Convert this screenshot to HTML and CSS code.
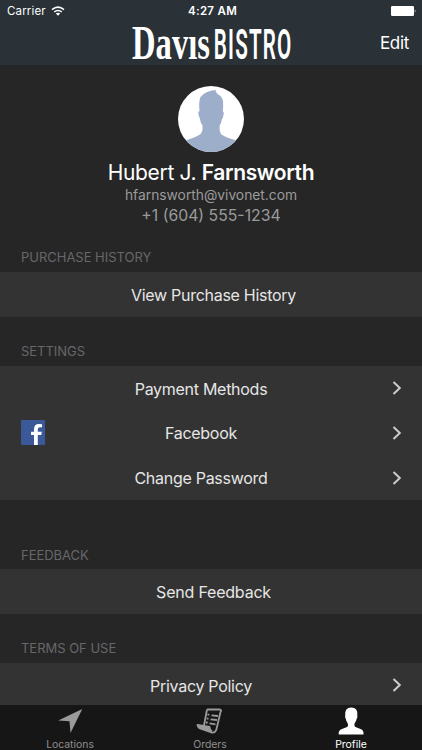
FILE: index.html
```html
<!DOCTYPE html>
<html lang="en">
<head>
<meta charset="utf-8">
<title>Profile</title>
<link rel="stylesheet" href="styles.css">
</head>
<body>
<div class="app">
  <header class="header">
    <div class="status">
      <span class="carrier">Carrier</span>
      <svg class="wifi" width="14" height="10" viewBox="0 0 14 10"><path d="M1 3.6Q7-1.4 13 3.6M3.2 5.9Q7 2.9 10.8 5.9" fill="none" stroke="#fff" stroke-width="1.5"/><path d="M4.8 7.4Q7 5.9 9.2 7.4L7 9.7Z" fill="#fff"/></svg>
      <span class="time">4:27 AM</span>
      <svg class="battery" width="26" height="10" viewBox="0 0 26 10"><rect width="23" height="10" rx="1.2" fill="#fff"/><path d="M23.8 3.2Q25.4 5 23.8 6.8Z" fill="#fff"/></svg>
    </div>
    <div class="nav">
      <svg class="logo" width="162" height="38" viewBox="0 0 162 38">
        <text class="logo-serif" x="2" y="35" textLength="78" lengthAdjust="spacingAndGlyphs">Davıs</text>
        <text class="logo-sans" transform="translate(83.800 34.500) scale(.48 1)">BISTRO</text>
      </svg>
      <span class="edit">Edit</span>
    </div>
  </header>
  <main class="content">
    <section class="profile">
      <svg class="avatar" width="66" height="66" viewBox="0 0 66 66">
        <defs><clipPath id="round"><circle cx="33" cy="33" r="33"/></clipPath></defs>
        <circle cx="33" cy="33" r="33" fill="#fff"/>
        <path clip-path="url(#round)" fill="#9daeca" d="M0 57Q5 55 9 54Q18 51 22 48.500Q25 46 24.500 39.500Q22.500 37 21.800 32.500Q20 29 20.300 25.500L21.500 25.500Q20.500 15 22.500 11Q27 5 38 4Q37 5.500 38.500 6.500L39.500 8Q44 10 45 15Q45.500 20 44.800 25.500Q46.200 25.500 45.500 29Q45 32 44 33Q43 38 41.700 39.500Q41.200 46 43.500 48.500Q48 51.500 57 54Q62 56 66 59V66H0Z"/>
      </svg>
      <h1 class="name">Hubert J. <b>Farnsworth</b></h1>
      <div class="email">hfarnsworth@vivonet.com</div>
      <div class="phone">+1 (604) 555-1234</div>
    </section>
    <h2 class="label first">PURCHASE HISTORY</h2>
    <div class="row"><span>View Purchase History</span></div>
    <h2 class="label">SETTINGS</h2>
    <div class="group">
      <div class="row link"><span>Payment Methods</span><svg class="chevron" width="10" height="14" viewBox="0 0 10 14"><path d="M1.500 1L7.800 7L1.500 13"/></svg></div>
      <div class="row link">
        <svg class="facebook" width="24" height="25" viewBox="0 0 24 25"><rect width="24" height="25" rx="1" fill="#3b5998"/><path fill="#fff" d="M13 25V15H10V11.700H13V9.200Q13 4 18 4Q20 4 21 4.200V7.300H19Q16.800 7.300 16.800 9.500V11.700H20.800L20.300 15H16.800V25Z"/></svg>
        <span>Facebook</span><svg class="chevron" width="10" height="14" viewBox="0 0 10 14"><path d="M1.500 1L7.800 7L1.500 13"/></svg>
      </div>
      <div class="row link"><span>Change Password</span><svg class="chevron" width="10" height="14" viewBox="0 0 10 14"><path d="M1.500 1L7.800 7L1.500 13"/></svg></div>
    </div>
    <h2 class="label spaced">FEEDBACK</h2>
    <div class="row"><span class="feedback">Send Feedback</span></div>
    <h2 class="label">TERMS OF USE</h2>
    <div class="row link"><span>Privacy Policy</span><svg class="chevron" width="10" height="14" viewBox="0 0 10 14"><path d="M1.500 1L7.800 7L1.500 13"/></svg></div>
  </main>
  <nav class="tabs">
    <div class="tab">
      <svg width="28" height="30" viewBox="0 0 28 30"><path fill="#9a9a9a" d="M26.300 4L14.500 28L13.500 16.300L2.200 15.500Z"/></svg>
      <span>Locations</span>
    </div>
    <div class="tab">
      <svg width="28" height="30" viewBox="0 0 28 30"><g fill="none" stroke="#9a9a9a" stroke-width="1.800" stroke-linejoin="round"><path d="M11 4.500H24Q26 5 24.500 7L20.500 24Q19.500 28 15.500 27.500L4 23.500Q2 22.500 1.500 20L13.500 22Q13.500 25 16 26.500M8 20.500L11 4.500"/><path d="M15.500 10.300L22 11M14.500 14.300L21 15M13.500 18.300L19.500 19.300M11.500 9.700H13.300M10.700 13.700H12.500M9.900 17.500H11.700"/></g><path fill="#9a9a9a" d="M1.500 20L13.300 22Q13.500 25 16 27.300L4 23.500Q2 22.500 1.500 20Z"/></svg>
      <span>Orders</span>
    </div>
    <div class="tab active">
      <svg width="28" height="30" viewBox="0 0 28 30"><path fill="#fff" d="M1.700 29.500Q1.200 25 5 24L10 22Q12 20.500 10.300 17.500Q9.200 16.500 8.800 13.800Q7.700 12.500 8.200 10.800Q7.200 2.700 14.200 2.500Q21.500 2.700 20.300 10.800Q20.800 12.500 19.700 13.800Q19.200 16.500 18 17.500Q16.500 20.500 18.500 22L23.500 24Q27 25 26.500 29.500Z"/></svg>
      <span>Profile</span>
    </div>
  </nav>
</div>
</body>
</html>
```
FILE: styles.css
```css
* { box-sizing: border-box; }
body {
  margin: 0;
  background: #262626;
  color: #e6e6e6;
  font-family: Inter, "Liberation Sans", sans-serif;
}
.app {
  width: 422px;
  height: 750px;
  display: flex;
  flex-direction: column;
  overflow: hidden;
}
.header { height: 65px; background: #2a3137; color: #fff; }
.status {
  height: 22px;
  display: grid;
  grid-template-columns: 50px 128px 68px 1fr;
  align-items: center;
  padding-left: 7px;
  font-size: 11.5px;
  line-height: 22px;
}
.carrier { letter-spacing: .15px; }
.wifi { display: block; justify-self: start; margin-left: -6px; }
.time { font-weight: 600; text-align: center; white-space: nowrap; margin-left: -13px; letter-spacing: .3px; }
.battery { display: block; justify-self: end; margin-right: 5px; }
.nav {
  height: 43px;
  display: flex;
  justify-content: space-between;
  padding: 2px 13px 0 130px;
}
.logo { display: block; fill: #fff; overflow: visible; }
.logo-serif { font: bold 48px "Liberation Serif", serif; }
.logo-sans { font: 600 43px Roboto, sans-serif; letter-spacing: 2.4px; }
.edit { font-size: 17px; line-height: 38px; letter-spacing: -.3px; }
.content { height: 640px; background: #262626; }
.profile {
  height: 175px;
  padding-top: 20.5px;
  display: flex;
  flex-direction: column;
  align-items: center;
}
.avatar { display: block; }
.name {
  margin: 7.5px 0 0;
  font-size: 21px;
  line-height: 28px;
  font-weight: 400;
  letter-spacing: -.35px;
  color: #fff;
  white-space: nowrap;
}
.name b { font-weight: 600; }
.email { margin-top: -1px; font-size: 13.8px; line-height: 18px; color: #9b9b9b; }
.phone { margin-top: 1px; font-size: 15.8px; line-height: 22px; color: #9b9b9b; }
.label {
  margin: 0;
  height: 49px;
  padding: 24px 21px 0;
  font-size: 13px;
  line-height: 20px;
  font-weight: 400;
  letter-spacing: -.02px;
  color: #67676a;
}
.label.first { height: 32px; padding-top: 7px; }
.label.spaced { height: 69px; padding-top: 44.5px; }
.row {
  height: 44.8px;
  display: grid;
  grid-template-columns: 60px 1fr 60px;
  align-items: center;
  background: #333;
  font-size: 16px;
  letter-spacing: -.28px;
  line-height: 20px;
}
.row span { grid-column: 2; grid-row: 1; justify-self: center; margin-left: 5px; padding-top: 1px; }
.row.link span { margin-left: 0; margin-right: 20px; }
.row .feedback { letter-spacing: -.2px; }
.facebook { grid-column: 1; grid-row: 1; margin-left: 21px; }
.chevron {
  grid-column: 3;
  grid-row: 1;
  margin-left: 30px;
  fill: none;
  stroke: #ccc;
  stroke-width: 2;
}
.tabs {
  height: 45px;
  background: #161616;
  display: grid;
  grid-template-columns: 140px 140px 142px;
}
.tab {
  display: flex;
  flex-direction: column;
  align-items: center;
  color: #8e8e8e;
  font-size: 10.4px;
  line-height: 11px;
}
.tab svg { display: block; margin-bottom: 4px; }
.tab.active { color: #fff; }
```
